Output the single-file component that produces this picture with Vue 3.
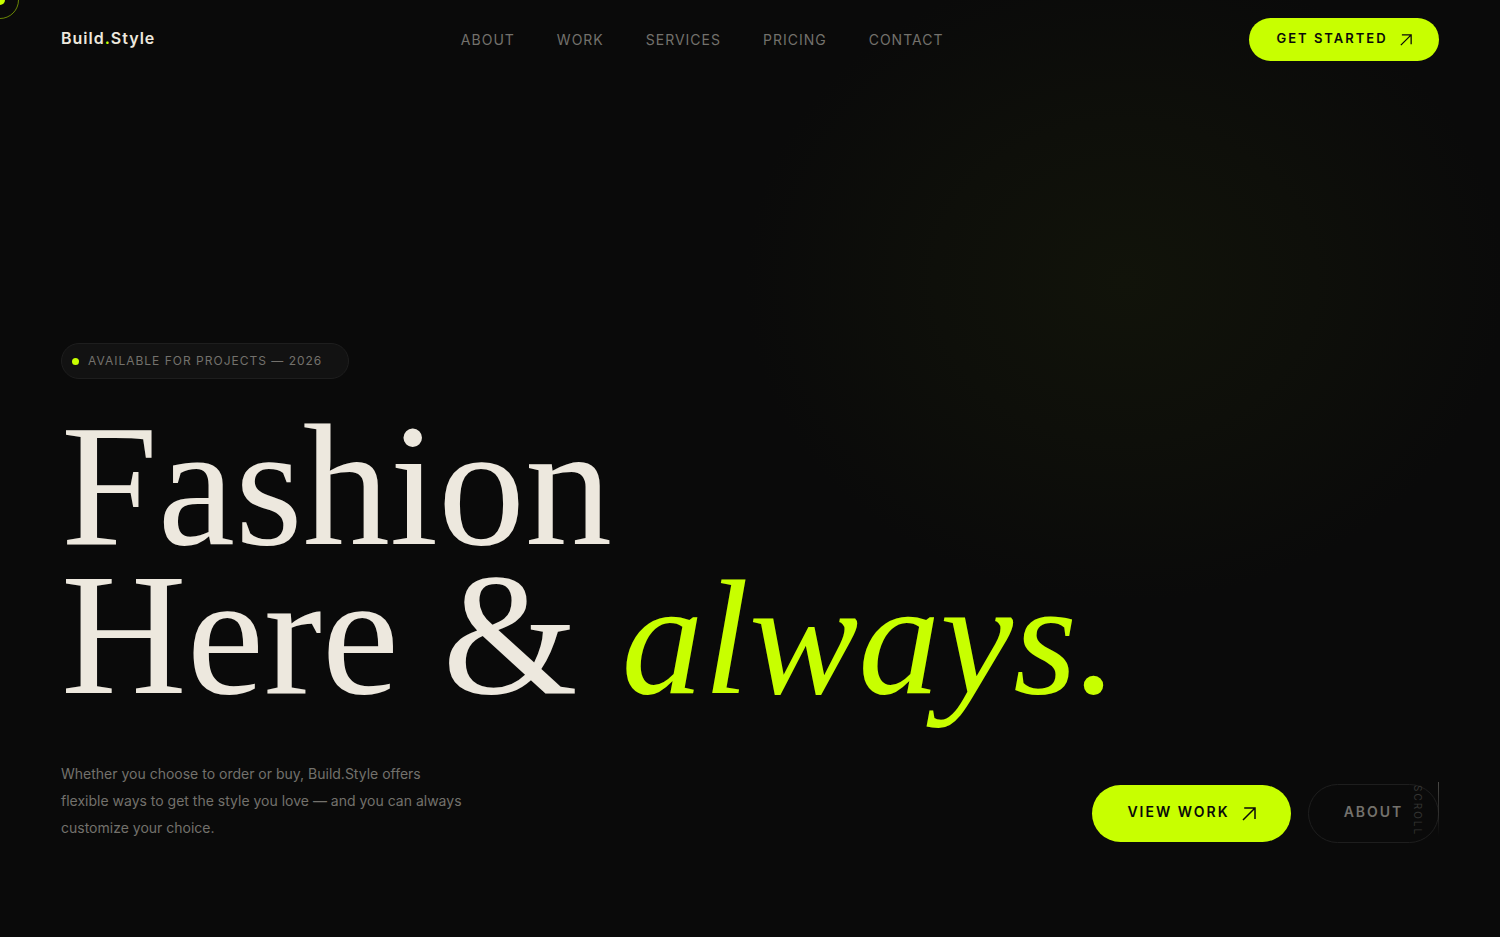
<script setup>
const links = ['About', 'Work', 'Services', 'Pricing', 'Contact']
</script>

<template>
  <div class="page">
    <span class="cursor-ring" aria-hidden="true"></span>
    <span class="cursor-dot" aria-hidden="true"></span>

    <header class="header">
      <a class="logo" href="#">Build<span class="accent">.</span>Style</a>
      <nav class="nav" aria-label="Main">
        <a v-for="link in links" :key="link" :href="'#' + link.toLowerCase()">{{ link }}</a>
      </nav>
      <a class="pill pill-small" href="#start">
        Get Started
        <svg class="arrow" viewBox="0 0 14 14" aria-hidden="true">
          <path d="M1 13 13 1M2.2 1H13v11" />
        </svg>
      </a>
    </header>

    <main class="hero">
      <p class="badge"><span class="badge-dot"></span>Available for projects — 2026</p>
      <h1 class="title">Fashion<br />Here &amp; <em>always.</em></h1>
      <div class="bottom">
        <p class="intro">
          Whether you choose to order or buy, Build.Style offers<br />
          flexible ways to get the style you love — and you can always<br />
          customize your choice.
        </p>
        <div class="actions">
          <a class="pill" href="#work">
            View Work
            <svg class="arrow arrow-large" viewBox="0 0 14 14" aria-hidden="true">
              <path d="M1 13 13 1M2.2 1H13v11" />
            </svg>
          </a>
          <a class="pill pill-outline" href="#about">About</a>
          <div class="scroll" aria-hidden="true">
            <span class="scroll-text">Scroll</span>
            <span class="scroll-line"></span>
          </div>
        </div>
      </div>
    </main>
  </div>
</template>

<style>
body {
  margin: 0;
  background: #0a0a0a;
}
</style>

<style scoped>
.page {
  position: relative;
  display: flex;
  flex-direction: column;
  min-height: 100vh;
  overflow: hidden;
  box-sizing: border-box;
  background: radial-gradient(ellipse 380px 320px at 75% 30%, #11130a 0%, #0e0f0a 50%, #0a0a0a 100%);
  color: #ede8de;
  font-family: Inter, "Liberation Sans", sans-serif;
}

a {
  color: inherit;
  text-decoration: none;
}

.cursor-ring,
.cursor-dot {
  position: absolute;
  border-radius: 50%;
  box-sizing: border-box;
}

.cursor-ring {
  top: -19px;
  left: -19px;
  width: 38px;
  height: 38px;
  border: 1px solid rgba(200, 255, 0, 0.5);
}

.cursor-dot {
  top: -5px;
  left: -5px;
  width: 10px;
  height: 10px;
  background: #c8ff00;
}

.header {
  display: flex;
  align-items: center;
  justify-content: space-between;
  padding: 18px 61px 0;
}

.logo {
  font-size: 16px;
  line-height: 20px;
  font-weight: 600;
  letter-spacing: 1px;
  padding-bottom: 3px;
}

.accent {
  color: #c8ff00;
}

.nav {
  display: flex;
  gap: 42px;
  color: #73716c;
  font-size: 14px;
  line-height: 16px;
  letter-spacing: 1px;
  text-transform: uppercase;
}

.pill {
  display: flex;
  align-items: center;
  justify-content: center;
  gap: 12px;
  box-sizing: border-box;
  min-width: 199px;
  height: 57px;
  padding-bottom: 4px;
  border-radius: 29px;
  background: #c8ff00;
  color: #0a0a0a;
  font-size: 14px;
  font-weight: 600;
  line-height: 16px;
  letter-spacing: 2px;
  text-transform: uppercase;
  white-space: nowrap;
}

.pill-small {
  min-width: 190px;
  height: 43px;
  font-size: 13px;
}

.pill-outline {
  min-width: 131px;
  height: 59px;
  border: 1px solid #1e1e1e;
  border-radius: 30px;
  background: none;
  color: #73716c;
}

.arrow {
  width: 12px;
  height: 12px;
  margin-top: 4px;
  fill: none;
  stroke: currentColor;
  stroke-width: 1.5;
}

.arrow-large {
  width: 14px;
  height: 14px;
}

.hero {
  display: flex;
  flex: 1;
  flex-direction: column;
  align-items: flex-start;
  justify-content: flex-end;
  padding: 0 61px 94px;
}

.badge {
  display: flex;
  align-items: center;
  gap: 9px;
  box-sizing: border-box;
  min-width: 288px;
  height: 36px;
  margin: 0 0 32px;
  padding: 0 17px 0 10px;
  border: 1px solid #1e1e1e;
  border-radius: 18px;
  background: #121212;
  color: #73716c;
  font-size: 12px;
  line-height: 16px;
  letter-spacing: 1px;
  text-transform: uppercase;
  white-space: nowrap;
}

.badge-dot {
  width: 7px;
  height: 7px;
  border-radius: 50%;
  background: #c8ff00;
}

.title {
  margin: 0;
  font-family: "Liberation Serif", serif;
  font-size: 174px;
  font-weight: 400;
  line-height: 149px;
  white-space: nowrap;
}

.title em {
  color: #c8ff00;
  font-size: 164px;
  line-height: 1px;
}

.bottom {
  display: flex;
  align-items: flex-end;
  justify-content: space-between;
  align-self: stretch;
  margin-top: 51px;
}

.intro {
  margin: 0;
  padding-bottom: 2px;
  color: #73716c;
  font-size: 14px;
  line-height: 27px;
}

.actions {
  position: relative;
  display: flex;
  align-items: center;
  gap: 17px;
}

.scroll {
  position: absolute;
  right: 0;
  bottom: 7px;
  display: flex;
  align-items: flex-end;
  gap: 14px;
  pointer-events: none;
}

.scroll-text {
  color: #343432;
  font-size: 10px;
  line-height: 12px;
  letter-spacing: 2px;
  text-transform: uppercase;
  writing-mode: vertical-rl;
}

.scroll-line {
  width: 1px;
  height: 54px;
  background: linear-gradient(#4a4946, transparent);
}
</style>
